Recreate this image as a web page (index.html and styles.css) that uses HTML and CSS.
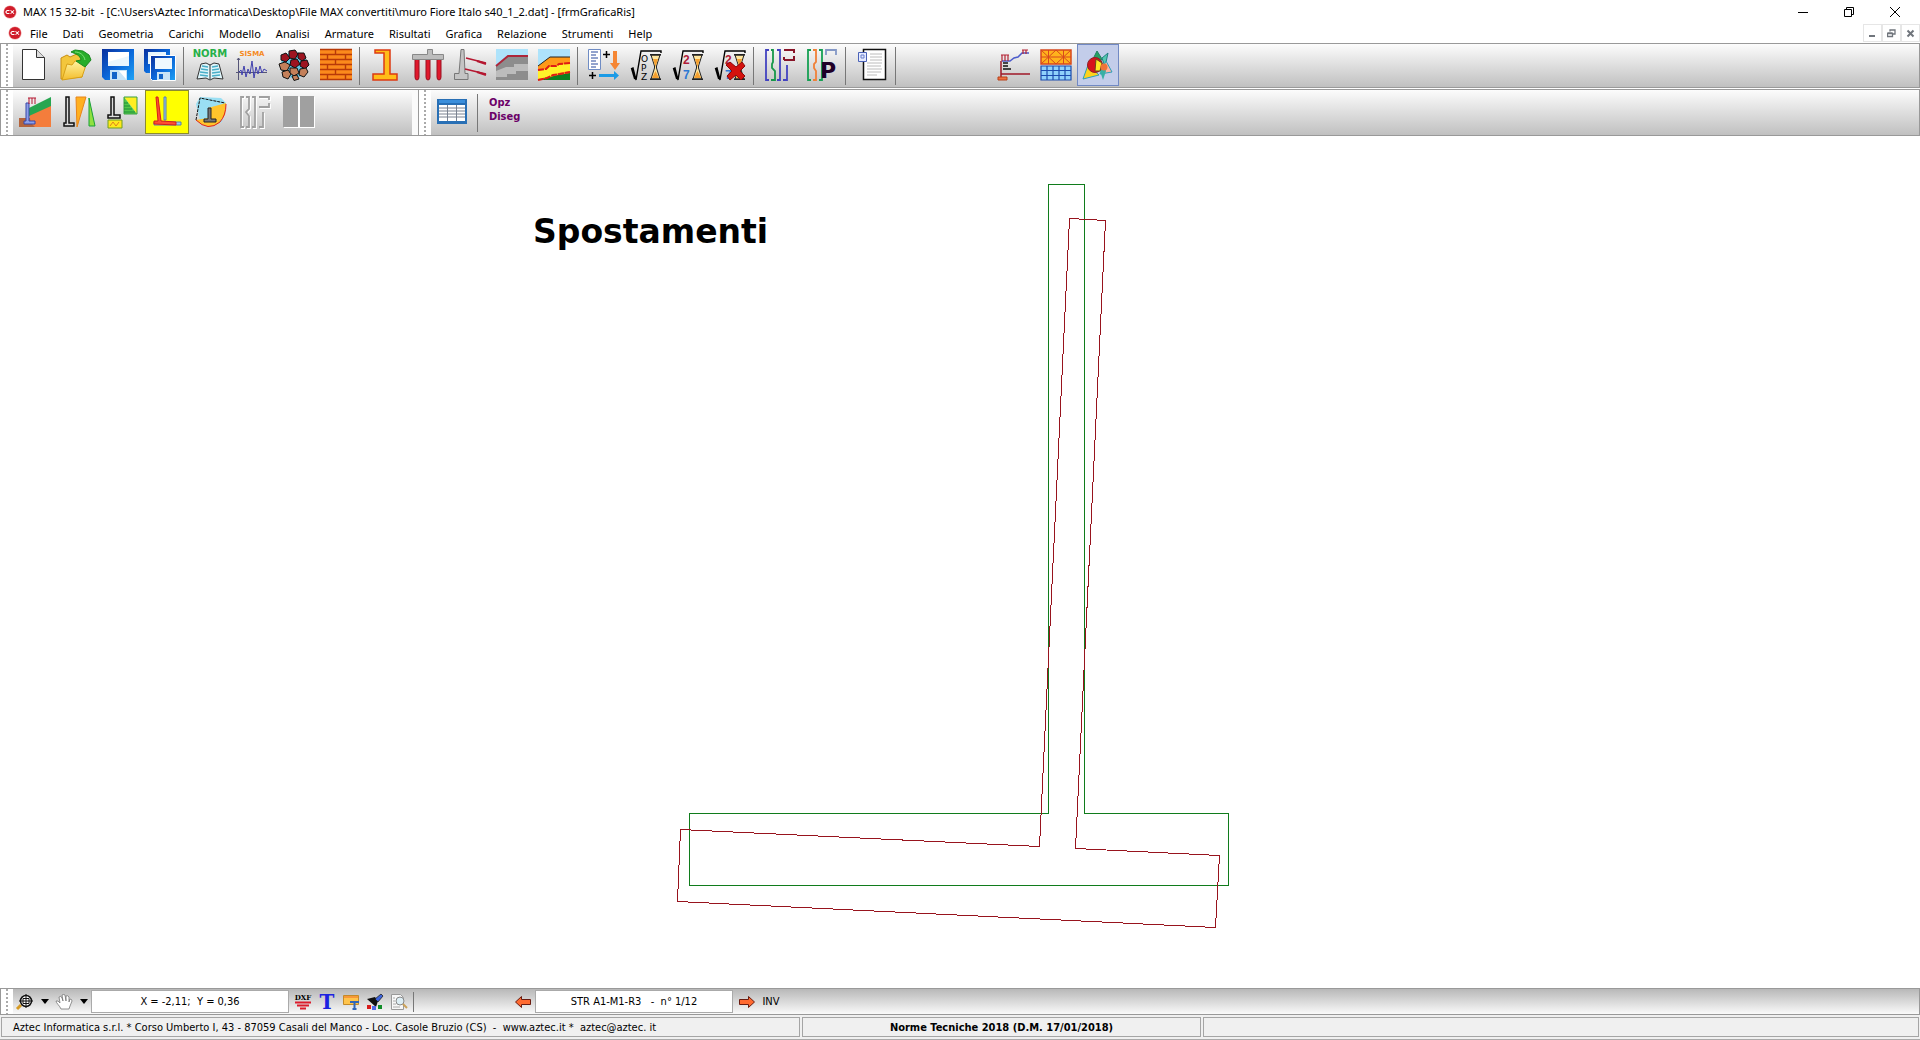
FILE: index.html
```html
<!DOCTYPE html>
<html lang="it">

<head>
	<meta charset="UTF-8">
	<meta name="viewport" content="width=device-width, initial-scale=1.0">
	<title>MAX 15 32-bit - [frmGraficaRis]</title>
	<link rel="stylesheet" href="styles.css">
</head>

<body>
	<!-- shared symbols -->
	<svg class="defs" width="0" height="0" aria-hidden="true">
		<defs>
			<linearGradient id="blue" x1="0" y1="0" x2="1" y2="1">
				<stop offset="0" stop-color="#0a2f9c" />
				<stop offset="0.5" stop-color="#0b66d8" />
				<stop offset="1" stop-color="#1ea2f6" />
			</linearGradient>
			<linearGradient id="folder" x1="0" y1="0" x2="0" y2="1">
				<stop offset="0" stop-color="#fff3a0" />
				<stop offset="1" stop-color="#f3bd2c" />
			</linearGradient>
			<symbol id="logo" viewBox="0 0 16 16">
				<circle cx="8" cy="8" r="7.5" fill="#f0a0a0" />
				<circle cx="8" cy="8" r="6.8" fill="#d01c2a" />
				<path d="M7.4 6.3H4.6L3.2 8l1.4 1.7h2.8M8.6 6l4 4M12.6 6l-4 4" fill="none" stroke="#fff" stroke-width="1.2" />
			</symbol>
			<symbol id="root" viewBox="0 0 32 32">
				<path d="M1 20l2-1 3 12L11 2h20v2" fill="none" stroke="#000" stroke-width="1.4" />
				<path d="M2 20l3 10" stroke="#000" stroke-width="2" />
			</symbol>
			<symbol id="hourglass" viewBox="0 0 11 26">
				<path d="M1 1h9L6.5 12v2L10 25H1l3.5-11v-2z" fill="#ffe7a0" stroke="#222" />
				<path d="M3 5h5l-2.5 8zM5.5 17L9 24H2z" fill="#f5a030" />
				<path d="M0 .8h11M0 25.2h11" stroke="#222" stroke-width="1.5" />
			</symbol>
		</defs>
	</svg>

	<header class="titlebar">
		<svg class="logo"><use href="#logo" /></svg>
		<h1>MAX 15 32-bit&nbsp; - [C:\Users\Aztec Informatica\Desktop\File MAX convertiti\muro Fiore Italo s40_1_2.dat] - [frmGraficaRis]</h1>
		<div class="window-buttons">
			<button aria-label="Riduci a icona"><svg width="12" height="12"><path d="M1 6.5h10" stroke="#000" /></svg></button>
			<button aria-label="Ripristina"><svg width="12" height="12"><path d="M1.5 3.5h7v7h-7zM3.5 3.5v-2h7v7h-2" fill="none" stroke="#000" /></svg></button>
			<button aria-label="Chiudi"><svg width="12" height="12"><path d="M1 1l10 10M11 1L1 11" stroke="#000" /></svg></button>
		</div>
	</header>

	<nav class="menubar">
		<svg class="logo"><use href="#logo" /></svg>
		<button>File</button>
		<button>Dati</button>
		<button>Geometria</button>
		<button>Carichi</button>
		<button>Modello</button>
		<button>Analisi</button>
		<button>Armature</button>
		<button>Risultati</button>
		<button>Grafica</button>
		<button>Relazione</button>
		<button>Strumenti</button>
		<button>Help</button>
		<div class="child-buttons">
			<button aria-label="Riduci finestra"><svg width="9" height="9"><path d="M1 7h6" stroke="#70757c" stroke-width="2" /></svg></button>
			<button aria-label="Ripristina finestra"><svg width="9" height="9"><path d="M.5 4.5h5v3h-5zM3 2.5V1h5v4H6M.5 4h5M3 1h5" fill="none" stroke="#70757c" stroke-width="1.3" /></svg></button>
			<button aria-label="Chiudi finestra"><svg width="9" height="9"><path d="M1.5 1.5l6 6M7.5 1.5l-6 6" stroke="#70757c" stroke-width="2" /></svg></button>
		</div>
	</nav>

	<div class="toolbar main-tools">
		<span class="grip"></span>
		<button aria-label="Nuovo">
			<svg class="icon" viewBox="0 0 32 32"><path d="M4.500.5h14l8 8v22h-22z" fill="#fff" stroke="#333" /><path d="M18.500.5v8h8" fill="#ddd" stroke="#333" /></svg>
		</button>
		<button aria-label="Apri">
			<svg class="icon" viewBox="0 0 32 32">
				<path d="M1 30V9l6-3 3 2 9-4 3 4v20z" fill="#f3c63c" stroke="#c98e12" />
				<path d="M2 31l5-16 5 1 3-4 12 1-5 15z" fill="url(#folder)" stroke="#d7a018" />
				<path d="M11 3l4-2 8 1 6 4 2 5-6 7-9-6 5-1c-1-5-5-6-10-8z" fill="#27ad2a" stroke="#1a8a20" />
				<path d="M15 3c5 0 9 3 10 8" fill="none" stroke="#7fe07a" />
			</svg>
		</button>
		<button aria-label="Salva">
			<svg class="icon" viewBox="0 0 32 32">
				<path d="M0 0h32v31H3l-3-3z" fill="url(#blue)" />
				<path d="M6 3h21v14H6z" fill="#e9f6fd" /><path d="M6 3h21v4L6 13z" fill="#fff" />
				<path d="M8 21h17v10H8z" fill="#c9e4f6" /><path d="M10 23h5v7h-5z" fill="#1264c8" /><path d="M17 22h7v8z" fill="#fff" />
			</svg>
		</button>
		<button aria-label="Salva tutto">
			<svg class="icon" viewBox="0 0 32 32">
				<path d="M0 0h26v24H2l-2-2z" fill="url(#blue)" /><path d="M4 3h18v12H4z" fill="#e9f6fd" />
				<path d="M6.5 6.5h25v25h-23l-2-2z" fill="url(#blue)" stroke="#fff" />
				<path d="M11 9h17v11H11z" fill="#eef8fe" /><path d="M13 23h13v8H13z" fill="#c9e4f6" /><path d="M15 25h4v5h-4z" fill="#1264c8" />
			</svg>
		</button>
		<span class="separator"></span>
		<button aria-label="Norme">
			<svg class="icon" viewBox="0 0 32 32">
				<text class="tag norm" x="16" y="8" text-anchor="middle">NORM</text>
				<path d="M3 30L7 15l5-1 4 2 4-2 5 1 4 15-9-1-4 2-4-2z" fill="#dff5fa" stroke="#333" />
				<path d="M16 16v14" stroke="#333" />
				<path d="M8 17l6 1M7 20l7 1M6 23l8 1M6 26l8 1M18 18l6-1M18 21l7-1M18 24l8-1M18 27l8-1" stroke="#48aec8" stroke-width="1.3" />
			</svg>
		</button>
		<button aria-label="Sisma">
			<svg class="icon" viewBox="0 0 32 32">
				<text class="tag sisma" x="16" y="7" text-anchor="middle">SISMA</text>
				<path d="M2.5 9v22M1 11l1.5-2L4 11M0 23.5h31" stroke="#557" fill="none" />
				<path d="M3 23l2-2 1 5 2-9 2 11 2-8 2 5 2-13 2 17 2-11 2 7 2-8 2 7 2-4 3 2" fill="none" stroke="#3f3fae" />
			</svg>
		</button>
		<button aria-label="Materiali">
			<svg class="icon" viewBox="0 0 32 32">
				<circle cx="16" cy="16" r="13" fill="#67c6e4" />
				<g stroke="#111" fill="#9d1420">
					<path d="M11 2l6-1 3 4-3 5-6-1z" /><path d="M20 4l6 0 2 5-4 3-4-3z" /><path d="M3 6l5-2 4 5-4 4-5-2z" /><path d="M13 11l6-1 3 5-5 4-5-3z" /><path d="M23 12l6-1 2 5-4 4-5-3z" />
				</g>
				<g stroke="#111" fill="#c4805a">
					<path d="M1 15l6-2 5 3-3 6-6-1z" /><path d="M4 23l6-2 3 4-3 5-5-2z" /><path d="M12 19l7 0 2 5-5 3-4-3z" /><path d="M22 20l6-1 2 4-4 5-5-2z" /><path d="M14 27l5-1 2 4-5 1.5z" />
				</g>
			</svg>
		</button>
		<button aria-label="Muratura">
			<svg class="icon" viewBox="0 0 32 32">
				<path d="M0 0h32v31H0z" fill="#fb8a1c" />
				<path d="M0 .5h32M0 5.5h32M0 10.5h32M0 15.5h32M0 20.5h32M0 25.5h32M0 30.5h32M15.500 0v5M7.500 5v5M25.500 5v5M15.500 10v5M7.500 15v5M25.500 15v5M15.500 20v5M7.500 25v5M25.500 25v5" stroke="#b83a08" stroke-width="1.4" />
			</svg>
		</button>
		<span class="separator"></span>
		<button aria-label="Geometria muro">
			<svg class="icon" viewBox="0 0 32 32"><path d="M5 1h15v24h7v6H3v-6h11V4H5z" fill="#ffbd18" stroke="#dd3a12" stroke-width="1.5" /></svg>
		</button>
		<button aria-label="Pali">
			<svg class="icon" viewBox="0 0 32 32">
				<path d="M3 9v19q0 3 2 3t2-3V9M14 9v19q0 3 2 3t2-3V9M25 9v19q0 3 2 3t2-3V9" fill="#e0182c" stroke="#991020" />
				<path d="M.5 5.5h15v-5h5v5h11v5H.5z" fill="#bdbdbd" stroke="#888" />
			</svg>
		</button>
		<button aria-label="Tiranti">
			<svg class="icon" viewBox="0 0 32 32">
				<path d="M7 .5h3l1 24h3v6H.5v-6H5z" fill="#c4c4c4" stroke="#777" />
				<path d="M12 9l20 5M11 20l21 5" stroke="#b51730" stroke-width="1.5" />
				<path d="M23 12l9 3M23 23l9 3" stroke="#b51730" stroke-width="2" />
			</svg>
		</button>
		<button aria-label="Profilo terreno">
			<svg class="icon" viewBox="0 0 32 32">
				<path d="M0 0h32v31H0z" fill="#aee3fb" /><path d="M0 17L12 7h20v24H0z" fill="#8d8d8d" />
				<path d="M0 22l10-4h8v-3h14v7H20v3h-9v3H0z" fill="#bcbcbc" />
				<path d="M0 17L12 7h20" fill="none" stroke="#ad263a" stroke-width="2" />
			</svg>
		</button>
		<button aria-label="Stratigrafia">
			<svg class="icon" viewBox="0 0 32 32">
				<path d="M0 0h32v31H0z" fill="#aee3fb" /><path d="M0 17L12 8h20v23H0z" fill="#ff9a18" />
				<path d="M0 22l8-2 2-2h8l2-2 12-2v8l-12 2-4 3-16 3z" fill="#fff22a" />
				<path d="M0 31l12-3 8-2 12-2v7z" fill="#0c8020" />
				<path d="M0 21l8-1 3-3h7l3-2 11-1M0 31l9-2 6-3 7-1 10-2" fill="none" stroke="#e01c14" stroke-width="2" stroke-dasharray="6 1" />
				<path d="M0 17L12 8h20" fill="none" stroke="#222" />
			</svg>
		</button>
		<span class="separator"></span>
		<button aria-label="Combinazioni">
			<svg class="icon" viewBox="0 0 32 32">
				<path d="M.5.5h12v20H.5z" fill="#fff" stroke="#6f8cc4" />
				<path d="M3 3h7M3 6h5M3 9h7M3 12h5M3 15h7M3 18h5" stroke="#28489c" />
				<path d="M15 5.5h7M18.5 2v7M1 26.5h7M4.5 23v7" stroke="#000" stroke-width="1.5" />
				<path d="M25 2h4v12h3l-5 7-5-7h3z" fill="#f58634" /><path d="M11 25h15v-3l5 4.5-5 4.5v-3H11z" fill="#1c9be6" />
			</svg>
		</button>
		<button aria-label="Opzioni di analisi">
			<svg class="icon" viewBox="0 0 32 32">
				<use href="#root" width="32" height="32" /><use href="#hourglass" x="20" y="5" width="11" height="26" />
				<text class="tiny" x="11" y="13">O</text><text class="tiny" x="11" y="22">P</text><text class="tiny" x="11" y="31">Z</text>
			</svg>
		</button>
		<button aria-label="Analisi">
			<svg class="icon" viewBox="0 0 32 32">
				<use href="#root" width="32" height="32" /><use href="#hourglass" x="20" y="5" width="11" height="26" />
				<text class="digit red" x="11" y="15">2</text><text class="digit azure" x="11" y="30">7</text>
			</svg>
		</button>
		<button aria-label="Annulla analisi">
			<svg class="icon" viewBox="0 0 32 32">
				<use href="#root" width="32" height="32" /><use href="#hourglass" x="20" y="5" width="11" height="26" />
				<text class="digit red" x="11" y="15">2</text><text class="digit azure" x="11" y="30">7</text>
				<path d="M12 16l4-3 6 5 6-5 3 4-5 5 5 5-4 4-5-5-6 5-3-4 5-5z" fill="#d3120e" stroke="#8d0808" />
			</svg>
		</button>
		<span class="separator"></span>
		<button aria-label="Armatura muro">
			<svg class="icon" viewBox="0 0 32 32" fill="none" stroke-width="1.8">
				<path d="M5 1H2v30h3M13 1h3v30h-3M19 31h4V16" stroke="#4343c0" /><path d="M7 1h2v12l-1 2v4l3 3v9H7" stroke="#17984a" />
				<path d="M20 1h10v3M20 11h10V7M20 8v3" stroke="#881428" stroke-width="2" />
			</svg>
		</button>
		<button aria-label="Armatura pali">
			<svg class="icon" viewBox="0 0 32 32" fill="none" stroke-width="1.8">
				<path d="M5 1H2v30h3M13 1h3v30h-3" stroke="#17a054" /><path d="M7 1h3v12l-2 2v4l2 3v9H7" stroke="#f08038" />
				<path d="M20 6V1h10v5" stroke="#8498c6" /><text class="pile" x="14" y="29">P</text>
			</svg>
		</button>
		<span class="separator"></span>
		<button aria-label="Relazione di calcolo">
			<svg class="icon" viewBox="0 0 32 32">
				<path d="M7.5.5h22v30h-22z" fill="#fff" stroke="#111" stroke-width="1.5" />
				<path d="M14 5h12M14 8h12M14 11h12M11 14h15M11 17h14M11 20h15M11 23h14M11 26h10" stroke="#bcbcbc" />
				<path d="M2.5 3.5h8v9h-8z" fill="#e6ebff" stroke="#4a62b8" /><path d="M5 6h3v3H5z" fill="none" stroke="#6a80cc" />
			</svg>
		</button>
		<span class="separator"></span>
		<span class="spacer"></span>
		<button aria-label="Vista modello">
			<svg class="icon" viewBox="0 0 32 32">
				<path d="M4 12h8l4-3 4-1 4-4h7" fill="none" stroke="#4c5ccc" stroke-width="1.5" />
				<path d="M3 6h8M4 6v6M7 6v6M10 6v6M24 1h6M25 1v4M28 1v4" stroke="#b42334" stroke-width="1.2" />
				<path d="M5 14h5M5 17h5M5 20h8" stroke="#111" stroke-width="1.5" /><path d="M3 12v16M3 25h29" stroke="#a01828" stroke-width="1.5" />
				<path d="M0 28h9v3H0z" fill="#f07040" stroke="#b84018" />
			</svg>
		</button>
		<button aria-label="Mesh">
			<svg class="icon" viewBox="0 0 32 32">
				<path d="M1 1h30v14H1z" fill="#ffb21c" stroke="#d8481c" stroke-width="1.5" />
				<path d="M1 8h30M1 1l15 14L31 1M1 15L16 1l15 14M8.5 1v14M23.5 1v14" fill="none" stroke="#d8481c" />
				<path d="M1 17h30v14H1z" fill="#8fd1fb" /><path d="M1 17h30v14H1zM1 21.5h30M1 26.5h30M7 17v14M13 17v14M19 17v14M25 17v14" fill="none" stroke="#1c4cae" stroke-width="1.2" />
			</svg>
		</button>
		<button class="pressed" aria-label="Grafica risultati" aria-pressed="true">
			<svg class="icon" viewBox="0 0 32 32">
				<path d="M15 2l5 8-4 5-5-5z" fill="#26a062" stroke="#208060" /><path d="M20 9l6-5-3 14z" fill="#55c8b0" stroke="#208080" />
				<path d="M6 16L1 30l16-4z" fill="#ffd21c" stroke="#28a0b8" /><path d="M24 12l6 11-12 2z" fill="#ffb3a0" stroke="#28a0b8" />
				<path d="M17 19l5-6 2 9-3 9z" fill="#38b0a4" /><circle cx="13" cy="16" r="7.500" fill="#d7141c" stroke="#90202c" />
				<path d="M14 10l6 4-2 8-5 0z" fill="#ffea26" stroke="#6a4a18" /><circle cx="22" cy="18" r="3.500" fill="#ef7438" />
			</svg>
		</button>
	</div>

	<div class="toolbar result-tools">
		<div class="band">
			<span class="grip"></span>
			<button aria-label="Pressioni terreno">
				<svg class="icon" viewBox="0 0 32 32">
					<path d="M0 22h32v9H0z" fill="#b5643c" /><path d="M10 18L32 7v24H16l-4-4z" fill="#f47d3c" /><path d="M10 12L32 1v9L10 20z" fill="#27a650" />
					<path d="M7 7v18H5v3h11v-3h-6V7z" fill="#8ea0e8" stroke="#3646a8" /><path d="M9 2h8M10 2v6M13 2v6M16 2v6" stroke="#b51730" />
				</svg>
			</button>
			<button aria-label="Diagrammi spinta">
				<svg class="icon" viewBox="0 0 32 32">
					<path d="M3 1h3v26h5v3H1v-3h2z" fill="#ddd" stroke="#111" stroke-width="1.5" /><path d="M13 1h10L14 31z" fill="#ffb020" stroke="#e88418" />
					<path d="M26 2v28h6z" fill="#90e040" stroke="#18a038" />
				</svg>
			</button>
			<button aria-label="Pressioni fondazione">
				<svg class="icon" viewBox="0 0 32 32">
					<path d="M4 1h3v18h6v3H1v-3h3z" fill="#ddd" stroke="#111" stroke-width="1.5" /><path d="M1 24h14v8H1z" fill="#ffe81c" stroke="#70a020" />
					<path d="M3 30l3-4 3 4 3-4" fill="none" stroke="#e0801c" /><path d="M17 1h13v17z" fill="#ffee22" /><path d="M17 1l13 17H17z" fill="#52c84a" /><path d="M17 1h13v17H17z" fill="none" stroke="#38a040" />
					<path d="M17 7h4M17 10h6M17 13h8M17 16h11" stroke="#1c8c38" />
				</svg>
			</button>
			<button class="active" aria-label="Spostamenti" aria-pressed="true">
				<svg class="icon" viewBox="0 0 32 32">
					<path d="M13 1h2v23h-2zM3 26h27v3H3z" fill="#9ccbf0" stroke="#557db0" />
					<path d="M5 1h2l3 24 15 1v3L3 28v-3h4z" fill="#ff5030" stroke="#d41c1c" />
				</svg>
			</button>
			<button aria-label="Stabilità globale">
				<svg class="icon" viewBox="0 0 32 32">
					<path d="M1 8l4-7 21 1 5 5-4 19-11 4-10-2z" fill="#9adff3" /><path d="M13 12l18-5-1 12-7 9-9 3-8-3-5-4 12-2z" fill="#ffc42c" />
					<path d="M1 24L5 2l25 5" fill="none" stroke="#111" stroke-dasharray="3 1" /><path d="M1 24q12 12 24 2 6-7 6-18" fill="none" stroke="#e0201c" />
					<path d="M13 12h3v11h5v3H9v-3h4z" fill="#777" stroke="#222" />
				</svg>
			</button>
			<button aria-label="Armature" disabled>
				<svg class="icon" viewBox="0 0 32 32" fill="none" stroke-width="1.8">
					<path d="M6 2H3v30h3M14 2h3v30h-3M8 2h3v12l-3 3 3 4v11H8M21 32h4V17M21 2h10v3M21 12h10V8" stroke="#fff" />
					<path d="M5 1H2v30h3M13 1h3v30h-3M7 1h3v12l-3 3 3 4v11H7M20 31h4V16M20 1h10v3M20 11h10V7" stroke="#a0a0a0" />
				</svg>
			</button>
			<button aria-label="Sezioni" disabled>
				<svg class="icon" viewBox="0 0 32 32"><path d="M1 1h31v31H1z" fill="#fff" /><path d="M0 0h15v31H0zM17 0h14v31H17z" fill="#a0a0a0" /></svg>
			</button>
		</div>
		<div class="band options">
			<span class="grip"></span>
			<button aria-label="Tabella">
				<svg class="icon" viewBox="0 0 32 32">
					<path d="M0 3h30v25H0z" fill="#286fb5" /><path d="M2 4h26v3H2z" fill="#3b8fdc" /><path d="M2 9h26v16H2z" fill="#fff" />
					<path d="M2 12h26M2 15h26M2 18h26M2 21h26M10.5 9v16M19.5 9v16" stroke="#7a8290" />
				</svg>
			</button>
			<span class="separator"></span>
			<button class="draw-options">Opz<br>Diseg</button>
		</div>
	</div>

	<main class="canvas">
		<svg class="drawing" viewBox="0 0 1920 852" role="img" aria-label="Spostamenti del muro">
			<text class="drawing-title" x="533" y="107">Spostamenti</text>
			<path class="wall" d="M1048.5 48.5H1084.5V677.5H1228.5V749.5H689.5V677.5H1048.5Z" />
			<path class="wall-moved" d="M1069.5 82.5L1105.5 84.5L1075.5 712.5L1219.5 719.5L1215.5 791.5L677.5 765.5L680.5 693.5L1039.5 710.5Z" />
		</svg>
	</main>

	<div class="toolbar view-tools">
		<span class="grip"></span>
		<button aria-label="Zoom">
			<svg class="icon-small" viewBox="0 0 16 16"><path d="M0 15l4-4" stroke="#d59a24" stroke-width="3" /><circle cx="9" cy="7" r="5.5" fill="#fff" stroke="#111" stroke-width="1.5" /><path d="M9 0v14M2 7h14M6 4.5h6v5H6z" fill="none" stroke="#111" /></svg>
		</button>
		<button class="arrow" aria-label="Opzioni zoom"><svg width="8" height="5"><path d="M0 0h8L4 5z" /></svg></button>
		<button aria-label="Sposta vista">
			<svg class="icon-small" viewBox="0 0 16 16"><path d="M5 15C4 12 0 9 0 7q2-1 4 2L3 3q2-2 3 1l1 3-1-6q2-1 3 0l1 6V2q2-1 3 1v5l1-3q2 0 2 2l-2 5-1 3z" fill="#fff" stroke="#777" stroke-width=".8" /></svg>
		</button>
		<button class="arrow" aria-label="Opzioni spostamento"><svg width="8" height="5"><path d="M0 0h8L4 5z" /></svg></button>
		<input class="field" type="text" aria-label="Coordinate" value="X = -2,11;&nbsp; Y = 0,36" readonly>
		<button aria-label="Esporta DXF">
			<svg class="icon-small" viewBox="0 0 16 16"><text class="dxf" x="8" y="6" text-anchor="middle">DXF</text><path d="M0 8.5h16M2 11.5h12M5 14.5h6" stroke="#dc1c2c" stroke-width="2" /></svg>
		</button>
		<button aria-label="Testo">
			<svg class="icon-small" viewBox="0 0 16 16"><text class="big-t" x="8" y="15" text-anchor="middle">T</text></svg>
		</button>
		<button aria-label="Finestra testo">
			<svg class="icon-small" viewBox="0 0 16 16"><path d="M.5 1.5h15v9H.5z" fill="#ffc44c" stroke="#c48a28" /><path d="M1 2h14v2H1z" fill="#f79838" /><path d="M7 8h9M11.5 8v7M9.500 15h4" stroke="#2f66ba" stroke-width="2" /></svg>
		</button>
		<button aria-label="Colori">
			<svg class="icon-small" viewBox="0 0 16 16"><path d="M0 5l8-2 3 4-2 6z" fill="#111" /><path d="M8 5l6-5 2 2-5 6z" fill="#3c64dc" stroke="#111" stroke-width=".7" /><path d="M0 11h4v4H0z" fill="#d81c1c" /><path d="M5 12h4v4H5z" fill="#5068e8" /><path d="M11 11h4v4h-4z" fill="#108c28" /></svg>
		</button>
		<button aria-label="Anteprima">
			<svg class="icon-small" viewBox="0 0 16 16"><path d="M.5.5h9l3 3v12H.5z" fill="#f7f7f7" stroke="#999" /><circle cx="9" cy="7" r="4" fill="#ddeef5" stroke="#888" /><path d="M12 10l4 4" stroke="#caa25a" stroke-width="2" /><path d="M2 4h2M2 7h2M2 10h3M2 13h7" stroke="#aaa" /></svg>
		</button>
		<span class="separator"></span>
		<div class="combination">
			<button aria-label="Combinazione precedente"><svg class="icon-small" viewBox="0 0 16 16"><path d="M.5 8l6-5.500v3h9v5h-9v3z" fill="#ff6a30" stroke="#6a1c10" /></svg></button>
			<input class="field" type="text" aria-label="Combinazione" value="STR A1-M1-R3&nbsp;&nbsp; - &nbsp;n° 1/12" readonly>
			<button aria-label="Combinazione successiva"><svg class="icon-small" viewBox="0 0 16 16"><path d="M15.500 8l-6-5.500v3h-9v5h9v3z" fill="#ff6a30" stroke="#6a1c10" /></svg></button>
			<button class="envelope">INV</button>
		</div>
	</div>

	<footer class="statusbar">
		<div class="pane company">Aztec Informatica s.r.l. * Corso Umberto I, 43 - 87059 Casali del Manco - Loc. Casole Bruzio (CS)&nbsp; - &nbsp;www.aztec.it *&nbsp; aztec@aztec. it</div>
		<div class="pane code">Norme Tecniche 2018 (D.M. 17/01/2018)</div>
		<div class="pane"></div>
	</footer>
</body>

</html>
```

FILE: styles.css
```css
* {
	box-sizing: border-box;
}

body {
	display: flex;
	flex-direction: column;
	height: 100vh;
	margin: 0;
	background-color: #fff;
	color: #000;
	font-family: "Noto Sans", "Open Sans", sans-serif;
	font-size: 11px;
}

button {
	display: flex;
	align-items: center;
	justify-content: center;
	flex-shrink: 0;
	padding: 0;
	border: 1px solid transparent;
	background: none;
	color: inherit;
	font: inherit;
}

svg {
	display: block;
	flex-shrink: 0;
}

.defs {
	position: absolute;
}

.logo {
	width: 14px;
	height: 14px;
}

/* Title and menu */
.titlebar {
	display: flex;
	align-items: center;
	height: 23px;
	padding: 0 2px 0 3px;
}

.titlebar h1 {
	margin: 0 0 0 6px;
	font-size: 11px;
	font-weight: normal;
	white-space: nowrap;
}

.window-buttons {
	display: flex;
	margin-left: auto;
}

.window-buttons button {
	width: 46px;
	height: 20px;
}

.menubar {
	display: flex;
	align-items: center;
	gap: 1px;
	height: 20px;
	padding-left: 8px;
}

.menubar > button {
	padding: 0 6px;
}

.child-buttons {
	display: flex;
	margin-left: auto;
}

.child-buttons button {
	width: 19px;
	height: 18px;
	border-color: #e6e6e6;
}

/* Toolbars */
.toolbar {
	display: flex;
	align-items: center;
	flex-shrink: 0;
	border: 1px solid #999;
	background: linear-gradient(#fcfcfc, #c0c0c0);
}

.main-tools {
	align-items: flex-start;
	height: 45px;
	margin-bottom: 1px;
}

.main-tools button {
	width: 42px;
	height: 42px;
}

.main-tools .pressed {
	border-color: #7189c4;
	background-color: #c3cdea;
}

.result-tools {
	height: 47px;
}

.result-tools button {
	width: 44px;
	height: 44px;
}

.result-tools .active {
	border-color: #8c8c30;
	background-color: #ff0;
}

.icon {
	width: 32px;
	height: 32px;
	overflow: visible;
}

.icon-small {
	width: 16px;
	height: 16px;
	overflow: visible;
}

.grip {
	align-self: stretch;
	flex-shrink: 0;
	width: 12px;
	background: repeating-linear-gradient(#aaa 0 2px, #fff 2px 4px) 5px 0 / 2px 100% no-repeat #fff;
}

.separator {
	align-self: center;
	flex-shrink: 0;
	width: 8px;
	height: 38px;
	background: linear-gradient(#777, #777) 2px 0 / 1px 100% no-repeat;
}

.spacer {
	width: 92px;
}

.band {
	display: flex;
	align-items: flex-start;
	align-self: stretch;
	width: 418px;
	border-right: 1px solid #999;
	box-shadow: inset -6px 0 #fafafa;
}

.band.options {
	flex: 1;
	border-right: none;
	box-shadow: none;
}

.result-tools .draw-options {
	align-items: flex-start;
	justify-content: flex-start;
	padding: 5px 0 0 5px;
	color: #6b0068;
	font-family: "DejaVu Sans Condensed", Tahoma, sans-serif;
	font-weight: bold;
	line-height: 14px;
	text-align: left;
}

.tag {
	font: bold 10px "DejaVu Sans", sans-serif;
}

.norm {
	fill: #25b048;
}

.sisma {
	fill: #f58a1c;
	font-size: 7px;
}

.tiny {
	font: 9px "DejaVu Sans", sans-serif;
}

.digit {
	font: bold 12px "Liberation Sans", sans-serif;
}

.red {
	fill: #b01c38;
}

.azure {
	fill: #2c78d4;
}

.pile {
	fill: #200028;
	font: bold 22px "DejaVu Sans", sans-serif;
}

/* Drawing area */
.canvas {
	flex: 1;
	min-height: 0;
}

.drawing {
	width: 100%;
	height: 100%;
}

.drawing-title {
	font: bold 33px "DejaVu Sans", Verdana, sans-serif;
}

.wall,
.wall-moved {
	fill: none;
	shape-rendering: crispEdges;
}

.wall {
	stroke: #107c1c;
}

.wall-moved {
	stroke: #98141e;
}

/* Bottom bars */
.view-tools {
	height: 27px;
	background: linear-gradient(#b8b8b8, #fafafa);
	font-family: "DejaVu Sans Condensed", Tahoma, sans-serif;
}

.view-tools button {
	width: 24px;
	height: 22px;
}

.view-tools .arrow {
	width: 15px;
}

.view-tools .separator {
	height: 20px;
}

.field {
	width: 198px;
	height: 23px;
	margin-right: 2px;
	padding: 0;
	border: 1px solid #aaa;
	background-color: #fff;
	font: inherit;
	text-align: center;
}

.combination {
	display: flex;
	align-items: center;
	margin-left: 92px;
}

.dxf {
	font: bold 7px "DejaVu Serif", serif;
}

.big-t {
	fill: #1c22e0;
	font: bold 20px "DejaVu Serif", serif;
}

.statusbar {
	display: flex;
	gap: 2px;
	height: 25px;
	padding: 2px 1px;
	border-bottom: 1px solid #aaa;
	background-color: #f0f0f0;
	font-family: "DejaVu Sans Condensed", Tahoma, sans-serif;
}

.pane {
	flex: 1;
	border: 1px solid #a5a5a5;
	line-height: 20px;
	white-space: nowrap;
}

.company {
	flex: 0 0 799px;
	padding-left: 11px;
}

.code {
	flex: 0 0 399px;
	font-weight: bold;
	text-align: center;
}
```
